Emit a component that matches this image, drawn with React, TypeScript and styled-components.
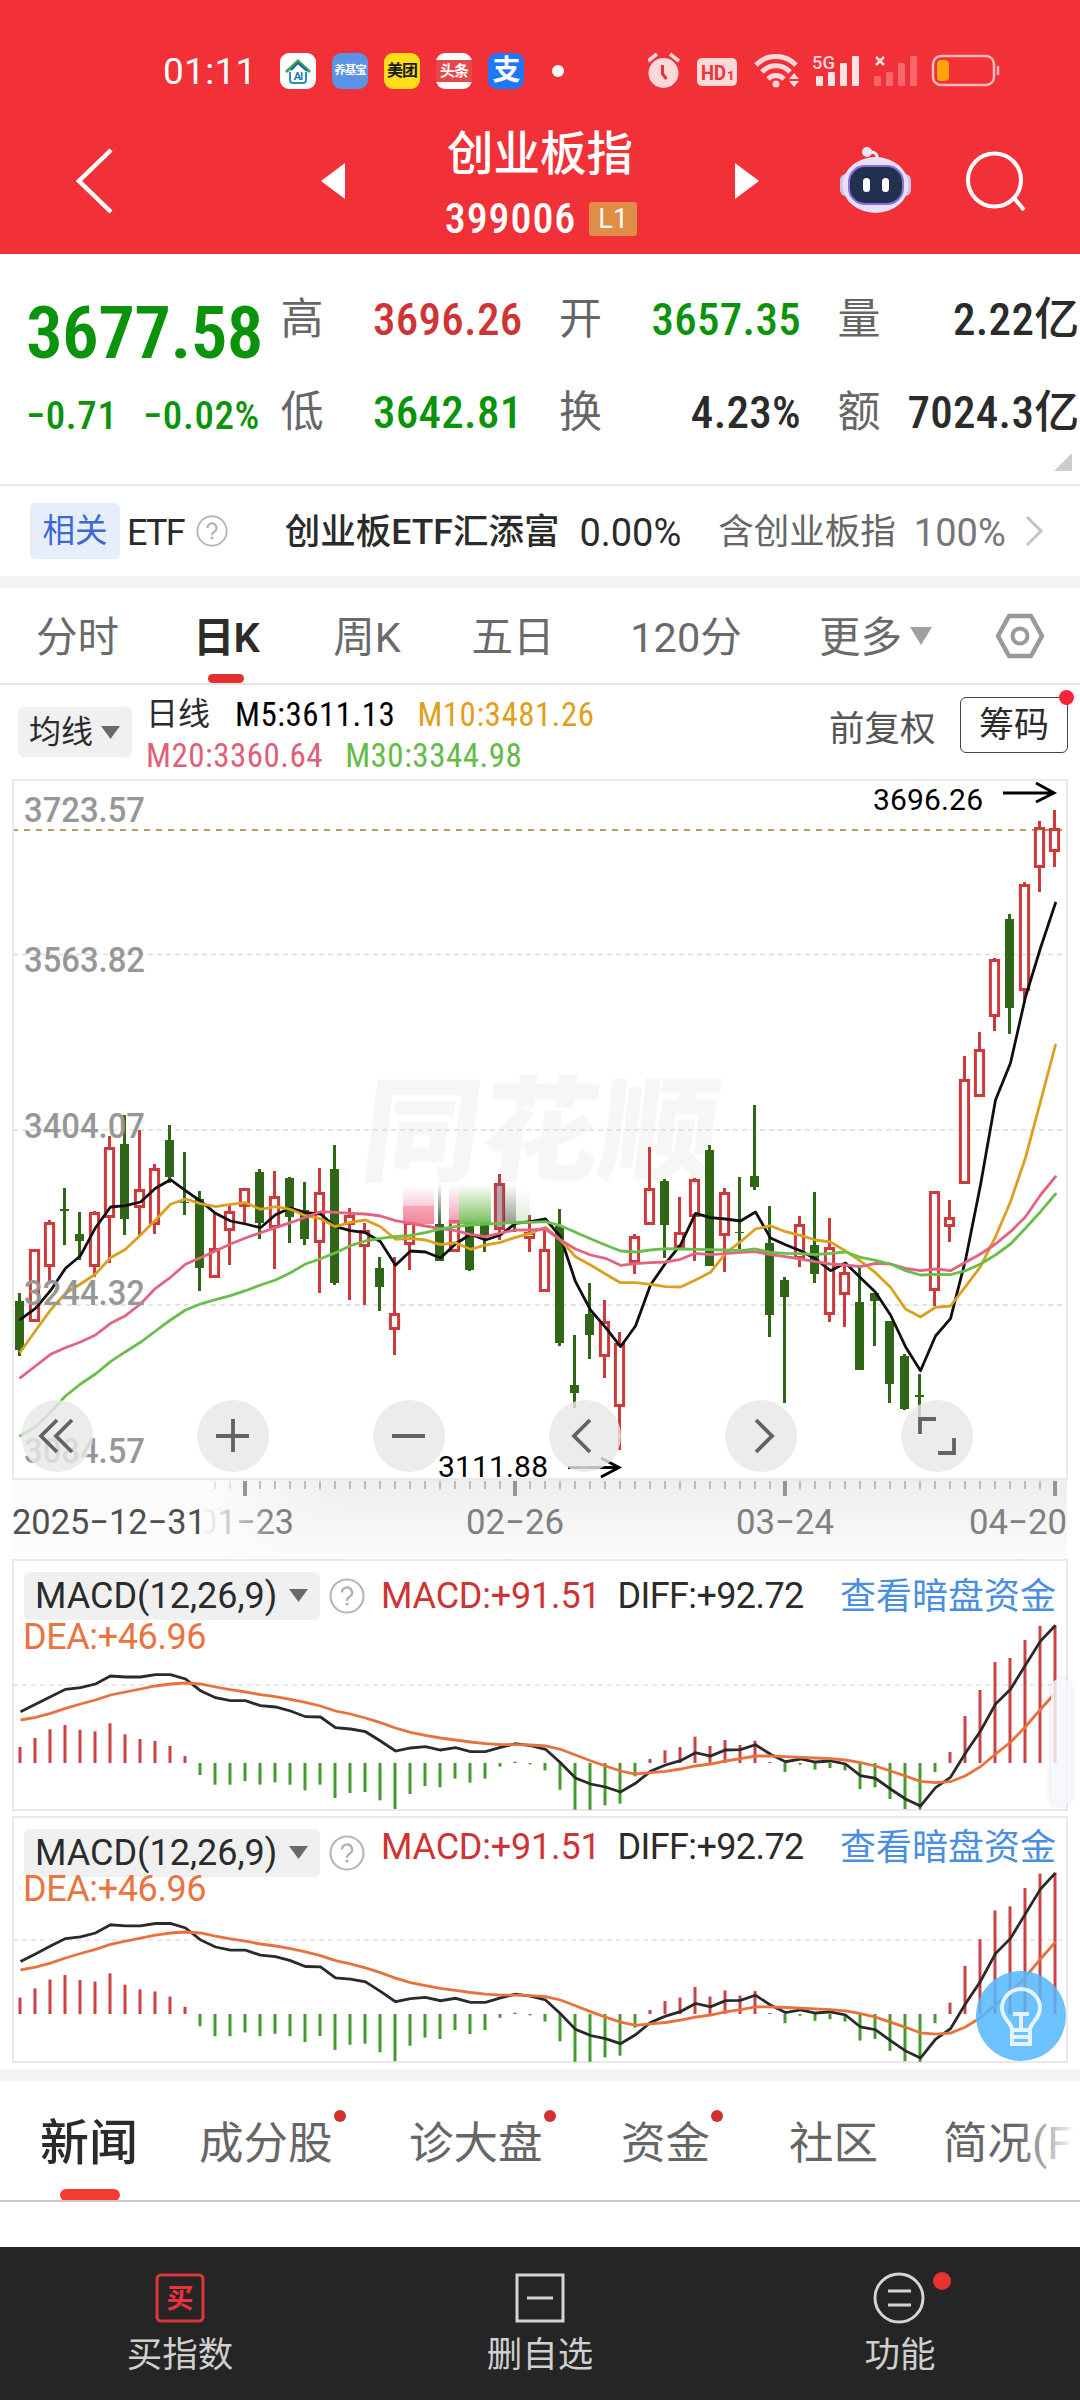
import { ReactNode } from 'react'
import styled, { createGlobalStyle } from 'styled-components'

const GlobalStyle = createGlobalStyle`
  * {
    box-sizing: border-box;
  }
  body {
    margin: 0;
    background: #fff;
    font-family: Roboto, 'Noto Sans CJK SC', sans-serif;
    color: #2b2b2b;
  }
  svg {
    display: block;
    flex: none;
  }
`

const RED = '#cc3a3c'
const GREEN = '#2f6618'

// ---------- data ----------

// direction (1 up, 0 down), high, body top, body bottom, low
const candles: number[][] = [
  [0, 1293, 1301, 1350, 1356],
  [1, 1249, 1249, 1322, 1322],
  [1, 1220, 1222, 1267, 1281],
  [0, 1188, 1209, 1211, 1245],
  [0, 1212, 1234, 1241, 1260],
  [1, 1211, 1212, 1267, 1277],
  [1, 1136, 1147, 1218, 1263],
  [0, 1115, 1144, 1219, 1235],
  [1, 1130, 1189, 1208, 1235],
  [1, 1164, 1168, 1225, 1234],
  [0, 1125, 1140, 1177, 1183],
  [0, 1152, 1202, 1203, 1215],
  [0, 1191, 1199, 1268, 1291],
  [1, 1213, 1248, 1278, 1278],
  [1, 1205, 1211, 1231, 1265],
  [1, 1188, 1188, 1207, 1223],
  [0, 1169, 1172, 1223, 1239],
  [1, 1171, 1196, 1228, 1269],
  [0, 1177, 1178, 1217, 1243],
  [0, 1182, 1210, 1239, 1245],
  [1, 1168, 1192, 1243, 1293],
  [0, 1145, 1169, 1283, 1285],
  [1, 1208, 1215, 1225, 1300],
  [1, 1223, 1230, 1247, 1305],
  [0, 1257, 1268, 1287, 1311],
  [1, 1257, 1313, 1330, 1355],
  [1, 1224, 1222, 1245, 1270],
  [],
  [0, 1224, 1224, 1261, 1261],
  [1, 1220, 1220, 1252, 1252],
  [0, 1222, 1222, 1270, 1271],
  [0, 1222, 1222, 1236, 1252],
  [1, 1174, 1183, 1230, 1240],
  [0, 1222, 1222, 1222, 1232],
  [1, 1215, 1232, 1239, 1252],
  [1, 1228, 1249, 1292, 1292],
  [0, 1209, 1226, 1343, 1346],
  [0, 1335, 1385, 1393, 1408],
  [0, 1283, 1314, 1335, 1359],
  [1, 1300, 1321, 1357, 1378],
  [1, 1332, 1343, 1407, 1450],
  [1, 1234, 1236, 1263, 1274],
  [1, 1147, 1188, 1225, 1225],
  [0, 1179, 1181, 1225, 1258],
  [1, 1197, 1232, 1248, 1248],
  [1, 1178, 1179, 1217, 1261],
  [0, 1145, 1150, 1266, 1266],
  [1, 1188, 1192, 1236, 1272],
  [0, 1177, 1232, 1233, 1249],
  [0, 1105, 1176, 1187, 1190],
  [0, 1206, 1243, 1315, 1337],
  [0, 1277, 1280, 1297, 1403],
  [1, 1216, 1224, 1259, 1267],
  [0, 1192, 1245, 1274, 1283],
  [1, 1218, 1247, 1315, 1322],
  [1, 1265, 1272, 1295, 1327],
  [0, 1267, 1302, 1370, 1370],
  [0, 1293, 1293, 1301, 1346],
  [0, 1321, 1321, 1384, 1403],
  [0, 1354, 1356, 1409, 1410],
  [0, 1374, 1395, 1397, 1427],
  [1, 1191, 1191, 1291, 1306],
  [1, 1200, 1217, 1227, 1242],
  [1, 1056, 1079, 1184, 1184],
  [1, 1032, 1049, 1097, 1097],
  [1, 958, 959, 1017, 1031],
  [0, 914, 919, 1008, 1034],
  [1, 882, 884, 991, 1003],
  [1, 821, 827, 868, 892],
  [1, 810, 828, 852, 867],
]

// moving averages, thirds of a pixel below y=1080
const ma5 = [
  718, 685, 632, 565, 527, 443, 381, 377, 366, 325, 299, 332, 363, 400, 423, 432, 443, 404, 384, 398, 402, 440, 452,
  458, 485, 556, 513, 516, 534, 492, 463, 480, 465, 430, 425, 417, 470, 605, 690, 742, 800, 738, 615, 550, 495, 400,
  413, 417, 423, 396, 474, 494, 512, 537, 572, 549, 593, 637, 705, 800, 872, 768, 716, 540, 315, 60, -51, -249, -396,
  -531,
]
const ma10 = [
  815, 752, 690, 640, 612, 582, 533, 508, 465, 420, 373, 357, 371, 380, 373, 368, 388, 380, 388, 407, 416, 440, 427,
  420, 440, 478, 475, 480, 494, 488, 508, 495, 487, 472, 460, 442, 480, 530, 555, 582, 608, 608, 613, 620, 621, 600,
  577, 520, 485, 447, 437, 455, 466, 480, 486, 513, 543, 578, 622, 687, 711, 682, 678, 620, 560, 470, 365, 233, 65,
  -105,
]
const ma20 = [
  893, 858, 823, 803, 786, 765, 730, 707, 672, 625, 592, 553, 533, 513, 492, 474, 458, 443, 428, 412, 395, 397, 400,
  402, 408, 422, 430, 438, 446, 452, 463, 470, 459, 450, 450, 447, 480, 507, 525, 535, 556, 551, 548, 546, 538, 520,
  524, 521, 517, 515, 524, 530, 537, 545, 552, 555, 560, 550, 552, 565, 572, 567, 572, 547, 522, 492, 455, 410, 345,
  290,
]
const ma30 = [
  1067, 1040, 997, 948, 912, 882, 845, 815, 787, 753, 720, 690, 672, 659, 647, 632, 615, 600, 578, 552, 536, 518, 497,
  483, 475, 470, 466, 458, 447, 440, 435, 432, 430, 428, 427, 425, 437, 457, 476, 495, 513, 516, 510, 506, 507, 508,
  509, 510, 512, 507, 517, 520, 521, 524, 520, 516, 532, 541, 552, 572, 585, 583, 584, 572, 552, 525, 492, 445, 395,
  342,
]

const macdBars = [
  48, 75, 101, 114, 99, 95, 119, 86, 72, 66, 51, 21, -36, -65, -65, -54, -65, -58, -65, -82, -65, -105, -90, -87, -112,
  -138, -93, -69, -73, -47, -59, -47, -11, 4, -4, -22, -80, -140, -140, -127, -122, -40, 12, 38, 48, 79, 51, 69, 54,
  67, 3, -27, -5, -20, -15, -22, -78, -73, -108, -138, -140, -27, 33, 141, 219, 303, 315, 369, 411, 413,
]
const diff = [
  515, 493, 470, 448, 443, 432, 408, 411, 411, 404, 404, 417, 452, 473, 482, 482, 497, 501, 513, 530, 531, 563, 567,
  575, 603, 633, 624, 620, 630, 623, 635, 635, 622, 611, 617, 628, 668, 714, 732, 741, 756, 730, 694, 675, 662, 638,
  648, 630, 629, 614, 643, 665, 657, 666, 663, 672, 707, 715, 747, 777, 798, 743, 712, 639, 573, 492, 448, 375, 303,
  256,
]
const dea = [
  540, 532, 520, 505, 492, 480, 465, 456, 447, 438, 432, 429, 432, 441, 449, 456, 464, 470, 478, 487, 498, 513, 522,
  534, 548, 564, 577, 586, 594, 600, 606, 611, 614, 614, 615, 618, 628, 645, 662, 678, 693, 702, 698, 694, 687, 678,
  672, 663, 656, 648, 648, 650, 652, 654, 656, 660, 668, 678, 693, 708, 724, 728, 725, 707, 680, 642, 607, 560, 508,
  458,
]

const cx = (i: number) => 19.5 + i * 15

const line = (values: number[], toY: (v: number) => number) =>
  values.map((v, i) => `${cx(i) + 1},${toY(v).toFixed(1)}`).join(' ')

// ---------- shared ----------

const Num = styled.span<{ $size: number; $color?: string; $weight?: number; $ls?: number; $narrow?: boolean }>`
  font-size: ${({ $size }) => $size}px;
  font-weight: ${({ $weight }) => $weight ?? 400};
  font-stretch: ${({ $narrow }) => ($narrow ? 75 : 100)}%;
  letter-spacing: ${({ $ls }) => $ls ?? 0}px;
  color: ${({ $color }) => $color ?? 'inherit'};
  line-height: 1;
  white-space: nowrap;
`

const Screen = styled.div`
  width: 1080px;
  height: 2400px;
  overflow: hidden;
  display: flex;
  flex-direction: column;
  background: #fff;
`

const Band = styled.div`
  height: 12px;
  flex: none;
  background: #f3f3f3;
`

// ---------- header ----------

const Top = styled.header`
  height: 254px;
  flex: none;
  background: #f13038;
  color: #fff;
`

const StatusBar = styled.div`
  height: 89px;
  padding: 53px 80px 0 163px;
  display: flex;
  align-items: center;
`

const Clock = styled(Num)`
  width: 117px;
`

const AppIcon = styled.div<{ $bg: string; $color: string; $size: number }>`
  width: 36px;
  height: 36px;
  margin-right: 16px;
  border-radius: 9px;
  display: flex;
  align-items: center;
  justify-content: center;
  background: ${({ $bg }) => $bg};
  color: ${({ $color }) => $color};
  font-size: ${({ $size }) => $size}px;
  font-weight: 700;
  line-height: 1;
  letter-spacing: -1px;
  white-space: nowrap;
`

const MoreDot = styled.div`
  width: 12px;
  height: 12px;
  margin-left: 12px;
  border-radius: 50%;
  background: #fff;
`

const StatusIcons = styled.svg`
  margin-left: auto;
`

const TitleBar = styled.div`
  height: 165px;
  padding-top: 18px;
  display: grid;
  grid-template-columns: 321px 24px 390px 24px 81px 71px 55px 60px;
  align-items: center;
`

const TitleBlock = styled.div`
  height: 100%;
  padding-top: 22px;
  display: flex;
  flex-direction: column;
  align-items: center;
`

const Title = styled.div`
  font-size: 46.5px;
  font-weight: 500;
  line-height: 50px;
`

const Code = styled.div`
  margin-top: 19px;
  padding-left: 2px;
  display: flex;
  align-items: center;
  gap: 13px;
`

const Level = styled.div`
  width: 48px;
  height: 34px;
  border-radius: 3px;
  background: #e08d48;
  font-size: 27px;
  line-height: 35px;
  text-align: center;
`

const Header = () => (
  <Top>
    <StatusBar>
      <Clock $size={37} $ls={0.3}>
        01:11
      </Clock>
      <AppIcon $bg="#fff" $color="#2276b5" $size={13}>
        <svg width="32" height="32" viewBox="0 0 32 32" fill="none">
          <path d="M4 17 16 6l12 11" stroke="#3aa655" strokeWidth="3" />
          <path d="M9 15 16 8l9 8" stroke="#1c5fa8" strokeWidth="2" />
          <path d="M8 17v8a3 3 0 0 0 3 3h10a3 3 0 0 0 3-3v-8" stroke="#2a8fc4" strokeWidth="2" />
          <text x="16" y="25" fill="#2276b5" fontSize="11" fontWeight="700" textAnchor="middle">
            AI
          </text>
        </svg>
      </AppIcon>
      <AppIcon $bg="#5b93e6" $color="#fff" $size={11.5}>
        养基宝
      </AppIcon>
      <AppIcon $bg="#ffdd1a" $color="#1c1c1c" $size={16}>
        美团
      </AppIcon>
      <AppIcon $bg="linear-gradient(#fff 7px, #e5484a 7px 29px, #fff 29px)" $color="#fff" $size={15}>
        头条
      </AppIcon>
      <AppIcon $bg="#1c77fb" $color="#fff" $size={28}>
        支
      </AppIcon>
      <MoreDot />
      <StatusIcons width="352" height="42" viewBox="648 50 352 42" fill="none">
        <g fill="#ffd9da">
          <circle cx="663.500" cy="73" r="15" />
          <path d="m648 61 9-7M679 61l-9-7" stroke="#ffd9da" strokeWidth="3.500" />
          <path d="M662.500 65v9l4 5" stroke="#f13038" strokeWidth="3" />
          <rect x="697" y="58" width="40" height="28" rx="5" />
        </g>
        <text x="701" y="80" fill="#f13038" fontSize="21" fontWeight="700" textLength="25" lengthAdjust="spacingAndGlyphs">
          HD
        </text>
        <text x="727" y="80" fill="#f13038" fontSize="13" fontWeight="700">
          1
        </text>
        <g stroke="#ffd9da" strokeWidth="5">
          <path d="M756 65a28 28 0 0 1 40 0" />
          <path d="M762 72a19 19 0 0 1 28 0" />
          <path d="M768 79a11 11 0 0 1 16 0" />
        </g>
        <circle cx="776" cy="84" r="3.500" fill="#ffd9da" />
        <path d="m789 79 5-6 5 6zM789 81l5 6 5-6z" fill="#ffd9da" />
        <text x="812" y="69" fill="#ffd9da" fontSize="19" fontWeight="500" textLength="23" lengthAdjust="spacingAndGlyphs">
          5G
        </text>
        <g fill="#ffe3e4">
          <rect x="816" y="76" width="7" height="10" rx="1" />
          <rect x="828" y="72" width="7" height="14" rx="1" />
          <rect x="840" y="63" width="7" height="23" rx="1" />
          <rect x="852" y="56" width="7" height="30" rx="1" />
        </g>
        <path d="m876 57 8 8m0-8-8 8" stroke="#ffd9da" strokeWidth="2.500" />
        <g fill="#f7686e">
          <rect x="874" y="76" width="7" height="10" rx="1" />
          <rect x="886" y="72" width="7" height="14" rx="1" />
          <rect x="898" y="63" width="7" height="23" rx="1" />
          <rect x="910" y="56" width="7" height="30" rx="1" />
        </g>
        <rect x="933" y="56" width="61" height="29" rx="8" stroke="#fdb9bb" strokeWidth="2.500" />
        <rect x="937" y="60" width="12" height="21" rx="4" fill="#ffa409" />
        <path d="M998 66v9" stroke="#fdb9bb" strokeWidth="2.500" />
      </StatusIcons>
    </StatusBar>
    <TitleBar>
      <svg width="120" height="70" viewBox="0 144 120 70" fill="none">
        <path d="M111 148 79 179l32 31" stroke="#fff" strokeWidth="4.500" />
      </svg>
      <svg width="24" height="36" viewBox="0 0 24 36">
        <path d="M24 0v36L0 18z" fill="#fff" />
      </svg>
      <TitleBlock>
        <Title>创业板指</Title>
        <Code>
          <Num $size={42} $narrow $ls={0.9} $weight={500}>
            399006
          </Num>
          <Level>L1</Level>
        </Code>
      </TitleBlock>
      <svg width="24" height="36" viewBox="0 0 24 36">
        <path d="M0 0v36l24-18z" fill="#fff" />
      </svg>
      <i />
      <svg width="71" height="68" viewBox="840 146 71 68" fill="none">
        <path d="M877 158q1-7-7-7" stroke="#fff" strokeWidth="3" />
        <circle cx="867" cy="151" r="5" fill="#ece4fb" />
        <rect x="840" y="173" width="12" height="22" rx="6" fill="#cfc3ee" />
        <rect x="899" y="173" width="12" height="22" rx="6" fill="#cfc3ee" />
        <ellipse cx="875.500" cy="184" rx="33" ry="28" fill="#e6e0fb" />
        <rect x="849" y="165" width="54" height="38" rx="16" fill="#22304f" stroke="#8a6fd8" strokeWidth="2" />
        <rect x="863" y="177" width="7" height="14" rx="3.500" fill="#fff" />
        <rect x="882" y="177" width="7" height="14" rx="3.500" fill="#fff" />
      </svg>
      <i />
      <svg width="60" height="62" viewBox="0 0 60 62" fill="none" stroke="#fff" strokeWidth="4">
        <circle cx="28.500" cy="30" r="26.500" />
        <path d="m48 48 10 12" />
      </svg>
    </TitleBar>
  </Top>
)

// ---------- quote ----------

const QuoteGrid = styled.section`
  position: relative;
  height: 232px;
  flex: none;
  padding: 19px 1px 0 26px;
  display: grid;
  grid-template-columns: 218px repeat(3, 242px);
  grid-template-rows: 93px 93px;
  align-content: start;
  column-gap: 36.5px;
  border-bottom: 2px solid #e9e9e9;
`

const Price = styled.div`
  padding-top: 24px;
`

const Change = styled.div`
  display: flex;
  justify-content: space-between;
  align-items: center;
  width: 234px;
  padding-top: 7px;
`

const Cell = styled.div`
  display: flex;
  justify-content: space-between;
  align-items: center;
  white-space: nowrap;
`

const Label = styled.span`
  font-size: 43px;
  line-height: 1;
  color: #666;
`

const Corner = styled.svg`
  position: absolute;
  right: 8px;
  bottom: 13px;
`

type CellProps = { label: string; value: string; color?: string }

const QuoteCell = ({ label, value, color = '#2b2b2b' }: CellProps) => (
  <Cell>
    <Label>{label}</Label>
    <Num $size={45} $weight={500} $narrow $ls={0.3} $color={color}>
      {value}
    </Num>
  </Cell>
)

const UP = '#cf3434'
const DOWN = '#0b930b'

const Quote = () => (
  <QuoteGrid>
    <Price>
      <Num $size={73} $weight={600} $narrow $ls={-0.6} $color={DOWN}>
        3677.58
      </Num>
    </Price>
    <QuoteCell label="高" value="3696.26" color={UP} />
    <QuoteCell label="开" value="3657.35" color={DOWN} />
    <QuoteCell label="量" value="2.22亿" />
    <Change>
      <Num $size={39} $weight={500} $narrow $ls={0.6} $color={DOWN}>
        −0.71
      </Num>
      <Num $size={39} $weight={500} $narrow $ls={0.6} $color={DOWN}>
        −0.02%
      </Num>
    </Change>
    <QuoteCell label="低" value="3642.81" color={DOWN} />
    <QuoteCell label="换" value="4.23%" />
    <QuoteCell label="额" value="7024.3亿" />
    <Corner width="18" height="18">
      <path d="M18 0v18H0z" fill="#ccc" />
    </Corner>
  </QuoteGrid>
)

const EtfRow = styled.section`
  height: 90px;
  flex: none;
  padding-left: 30px;
  display: flex;
  align-items: center;

  > span {
    margin-top: 4px;
  }
`

const Related = styled.div`
  width: 90px;
  height: 56px;
  margin-right: 7px;
  border-radius: 5px;
  background: #e7eefb;
  color: #3c68d4;
  font-size: 32.5px;
  line-height: 56px;
  text-align: center;
`

const Spacer = styled.div<{ $w: number }>`
  width: ${({ $w }) => $w}px;
  flex: none;
`

const HelpIcon = ({ size = 32 }: { size?: number }) => (
  <svg width={size} height={size} viewBox="0 0 36 36" fill="none">
    <circle cx="18" cy="18" r="16.500" stroke="#b8b8b8" strokeWidth="2.200" />
    <path d="M13 14.500a5 5 0 1 1 7.500 4.300c-1.900 1.100-2.500 1.900-2.500 4" stroke="#b0b0b0" strokeWidth="2.300" />
    <circle cx="18" cy="26" r="1.600" fill="#b0b0b0" />
  </svg>
)

const Etf = () => (
  <EtfRow>
    <Related>相关</Related>
    <Num $size={36} $ls={-1.8}>
      ETF
    </Num>
    <Spacer $w={12} />
    <HelpIcon />
    <Spacer $w={57} />
    <Num $size={35.5} $weight={500}>
      创业板ETF汇添富
    </Num>
    <Spacer $w={20} />
    <Num $size={38}>0.00%</Num>
    <Spacer $w={37} />
    <Num $size={35.5} $color="#666">
      含创业板指
    </Num>
    <Spacer $w={18} />
    <Num $size={38} $color="#777">
      100%
    </Num>
    <Spacer $w={19} />
    <svg width="20" height="32" viewBox="0 0 20 32" fill="none">
      <path d="m2 2 14 14L2 30" stroke="#c4c4c4" strokeWidth="3" />
    </svg>
  </EtfRow>
)

// ---------- period tabs ----------

const PeriodBar = styled.nav`
  height: 97px;
  flex: none;
  display: grid;
  grid-template-columns: 155px 142px 140px 152px 194px 119px 178px;
  align-items: center;
  border-bottom: 2px solid #e3e3e3;
`

const Period = styled.div<{ $active?: boolean; $end?: boolean }>`
  position: relative;
  height: 100%;
  display: flex;
  align-items: center;
  justify-content: ${({ $end }) => ($end ? 'flex-end' : 'center')};
  font-size: 41.5px;
  line-height: 1;
  padding-top: 4px;
  color: ${({ $active }) => ($active ? '#2b2b2b' : '#6a6a6a')};
  font-weight: ${({ $active }) => ($active ? 600 : 400)};
  letter-spacing: ${({ $active }) => ($active ? -1 : 0)}px;
  white-space: nowrap;

  &::after {
    content: '';
    display: ${({ $active }) => ($active ? 'block' : 'none')};
    position: absolute;
    bottom: 0;
    left: calc(50% - 18px);
    width: 36px;
    height: 9px;
    border-radius: 5px;
    background: #e3302e;
  }
`

const Periods = () => (
  <PeriodBar>
    <Period>分时</Period>
    <Period $active>日K</Period>
    <Period>周K</Period>
    <Period>五日</Period>
    <Period>120分</Period>
    <Period $end>更多</Period>
    <svg width="154" height="62" viewBox="902 605 154 62" fill="none">
      <path d="M910 627h22l-11 18z" fill="#a0a0a0" />
      <path d="m998 636 11-20h22l11 20-11 20h-22z" stroke="#999" strokeWidth="4.500" strokeLinejoin="round" />
      <circle cx="1020" cy="636" r="7.500" stroke="#999" strokeWidth="4" />
    </svg>
  </PeriodBar>
)

// ---------- moving average legend ----------

const Legend = styled.section`
  height: 94px;
  flex: none;
  padding: 12px 12px 0 18px;
  display: flex;
`

const Picker = styled.div<{ $w: number; $h: number }>`
  width: ${({ $w }) => $w}px;
  height: ${({ $h }) => $h}px;
  padding: 0 12px 0 11px;
  display: flex;
  align-items: center;
  justify-content: space-between;
  border-radius: 6px;
  background: #f0f0f0;
  font-size: 32px;
  line-height: 1;
  white-space: nowrap;
`

const Averages = styled.div`
  margin-left: 14px;
  width: 683px;
  display: flex;
  flex-direction: column;
  gap: 7px;
`

const AverageRow = styled.div`
  display: flex;
  align-items: center;
  height: 34px;
`

const Adjust = styled.div`
  width: 131px;
  padding-top: 12px;
  font-size: 35.5px;
  line-height: 40px;
  color: #555;
`

const Chips = styled.div`
  position: relative;
  width: 108px;
  height: 56px;
  border: 1.5px solid #444;
  border-radius: 6px;
  font-size: 35px;
  line-height: 56px;
  text-align: center;

  &::after {
    content: '';
    position: absolute;
    top: -8px;
    right: -7px;
    width: 15px;
    height: 15px;
    border-radius: 50%;
    background: #f82438;
  }
`

const PickerWrap = styled.div`
  padding-top: 10px;
`

const Caret = () => (
  <svg width="19" height="13">
    <path d="M0 0h19L9.500 13z" fill="#6a6a6a" />
  </svg>
)

const MaLegend = () => (
  <Legend>
    <PickerWrap>
      <Picker $w={114} $h={50}>
        均线
        <Caret />
      </Picker>
    </PickerWrap>
    <Averages>
      <AverageRow>
        <Num $size={32}>日线</Num>
        <Spacer $w={25} />
        <Num $size={33} $color="#000" $narrow $ls={0.5}>
          M5:3611.13
        </Num>
        <Spacer $w={22} />
        <Num $size={33} $color="#dfa020" $narrow $ls={0.5}>
          M10:3481.26
        </Num>
      </AverageRow>
      <AverageRow>
        <Num $size={33} $color="#e0607a" $narrow $ls={0.5}>
          M20:3360.64
        </Num>
        <Spacer $w={22} />
        <Num $size={33} $color="#64bb46" $narrow $ls={0.5}>
          M30:3344.98
        </Num>
      </AverageRow>
    </Averages>
    <Adjust>前复权</Adjust>
    <Chips>筹码</Chips>
  </Legend>
)

// ---------- candle chart ----------

const ChartBox = styled.section`
  position: relative;
  height: 780px;
  flex: none;
`

const Controls = styled.div`
  position: absolute;
  left: 21px;
  top: 621px;
  display: flex;
  gap: 104px;
`

const Control = styled.button`
  width: 72px;
  height: 72px;
  padding: 0;
  border: 0;
  border-radius: 50%;
  background: rgba(232, 232, 232, 0.82);
`

const ControlButton = ({ children }: { children: ReactNode }) => (
  <Control>
    <svg width="72" height="72" viewBox="-36 -36 72 72" fill="none" stroke="#636363" strokeWidth="3.800">
      {children}
    </svg>
  </Control>
)

const axisLabels: [string, number][] = [
  ['3723.57', 822],
  ['3563.82', 972],
  ['3404.07', 1138],
  ['3244.32', 1305],
  ['3084.57', 1463],
]

const toMaY = (v: number) => 1080 + v / 3

const Candle = ({ data, x }: { data: number[]; x: number }) => {
  const [up, high, top, bottom, low] = data
  if (high === undefined) return null
  if (!up) {
    return (
      <g fill={GREEN}>
        <rect x={x - 1.5} y={high} width="3" height={low - high} />
        <rect x={x - 4.5} y={top} width="9" height={Math.max(bottom - top, 1)} />
      </g>
    )
  }
  return (
    <g stroke={RED} strokeWidth="3" fill="none">
      <path d={`M${x} ${high}V${top + 1}M${x} ${bottom - 1}V${low}`} />
      <rect x={x - 4.1} y={top + 1.5} width="8.200" height={bottom - top - 3} />
    </g>
  )
}

const CandleChart = () => (
  <ChartBox>
    <svg width="1080" height="780" viewBox="0 779 1080 780">
      <defs>
        <linearGradient id="axis" x1="0" y1="0" x2="0" y2="1">
          <stop offset="0" stopColor="#eee" />
          <stop offset="1" stopColor="#fbfbfb" />
        </linearGradient>
        <linearGradient id="axisFade" x1="0" y1="0" x2="1" y2="0">
          <stop offset="0" stopColor="#fdfdfd" />
          <stop offset="0.600" stopColor="#fdfdfd" />
          <stop offset="1" stopColor="#f8f8f8" stopOpacity="0" />
        </linearGradient>
        <linearGradient id="dateFade" gradientUnits="userSpaceOnUse" x1="200" y1="0" x2="275" y2="0">
          <stop offset="0" stopColor="#fdfdfd" />
          <stop offset="1" stopColor="#808080" />
        </linearGradient>
        <linearGradient id="smearPink" x1="0" y1="0" x2="0" y2="1">
          <stop offset="0" stopColor="#f58ba0" stopOpacity="0" />
          <stop offset="1" stopColor="#f0708a" stopOpacity="0.750" />
        </linearGradient>
        <linearGradient id="smearGreen" x1="0" y1="0" x2="0" y2="1">
          <stop offset="0" stopColor="#7cc35f" stopOpacity="0" />
          <stop offset="1" stopColor="#6cb94e" stopOpacity="0.950" />
        </linearGradient>
        <linearGradient id="smearDark" x1="0" y1="0" x2="0" y2="1">
          <stop offset="0" stopColor="#28401c" stopOpacity="0" />
          <stop offset="1" stopColor="#28401c" stopOpacity="0.850" />
        </linearGradient>
      </defs>

      <text
        transform="translate(358 1172) skewX(-7)"
        fontFamily="'Noto Sans CJK SC'"
        fontSize="114"
        fontWeight="900"
        textLength="356"
        lengthAdjust="spacingAndGlyphs"
        fill="#f6f6f6"
      >
        同花顺
      </text>

      <g stroke="#dcdcdc" strokeWidth="1.500" strokeDasharray="5 4">
        <path d="M13 954.500H1067M13 1130H1067M13 1305H1067" />
      </g>
      <path d="M12 830H1062" stroke="#b99a5f" strokeWidth="2" strokeDasharray="6 6" />
      <rect x="13" y="780" width="1054" height="699" fill="none" stroke="#e9e9e9" strokeWidth="2" />

      {candles.map((c, i) => (
        <Candle key={i} data={c} x={cx(i)} />
      ))}

      <rect x="403" y="1186" width="31" height="38" fill="url(#smearPink)" />
      <rect x="403" y="1206" width="31" height="18" fill="#f0708a" opacity="0.400" />
      <rect x="438" y="1184" width="3" height="40" fill="url(#smearDark)" />
      <rect x="449" y="1184" width="10" height="40" fill="url(#smearPink)" />
      <rect x="459" y="1184" width="32" height="40" fill="url(#smearGreen)" />
      <rect x="495" y="1183" width="9" height="45" fill="#8c5060" opacity="0.550" />
      <rect x="504" y="1184" width="12" height="40" fill="url(#smearDark)" opacity="0.600" />
      <rect x="516" y="1190" width="14" height="34" fill="url(#smearGreen)" opacity="0.300" />

      <g fill="none" strokeWidth="2.800" strokeLinejoin="round" strokeLinecap="round">
        <polyline points={line(ma5, toMaY)} stroke="#101010" />
        <polyline points={line(ma10, toMaY)} stroke="#dba01f" />
        <polyline points={line(ma20, toMaY)} stroke="#e26480" />
        <polyline points={line(ma30, toMaY)} stroke="#68bf4a" />
      </g>

      <g fill="#979797" fontSize="35" fontWeight="500">
        {axisLabels.map(([text, y]) => (
          <text key={text} x="24" y={y} textLength="121" lengthAdjust="spacingAndGlyphs">
            {text}
          </text>
        ))}
      </g>

      <g fill="#000" fontSize="30">
        <text x="873" y="810" textLength="110">
          3696.26
        </text>
        <text x="438" y="1476.500" textLength="110">
          3111.88
        </text>
      </g>
      <g fill="none" stroke="#000" strokeWidth="2.900">
        <path d="M1003 793h51M1036 783l18 10-18 9" />
        <path d="M568 1467.500h51M601 1458l18 9.500-18 9.500" />
      </g>

      <rect x="13" y="1480" width="1054" height="79" fill="url(#axis)" />
      <rect x="12" y="1480" width="340" height="79" fill="url(#axisFade)" opacity="0.850" />
      {candles.map((_, i) => {
        const major = i % 18 === 15
        if (i < 13) return null
        return (
          <rect
            key={i}
            x={major ? cx(i) - 1.5 : cx(i) - 0.5}
            y="1481"
            width={major ? 4 : 2}
            height={major ? 15 : 8}
            fill={major ? '#969696' : '#bdbdbd'}
            opacity={i < 15 ? 0.4 : 1}
          />
        )
      })}
      <g fill="#808080" fontSize="35">
        <text x="198" y="1533.500" textLength="96" lengthAdjust="spacingAndGlyphs" fill="url(#dateFade)">
          01−23
        </text>
        <text x="466" y="1533.500" textLength="98" lengthAdjust="spacingAndGlyphs">
          02−26
        </text>
        <text x="736" y="1533.500" textLength="98" lengthAdjust="spacingAndGlyphs">
          03−24
        </text>
        <text x="969" y="1533.500" textLength="98" lengthAdjust="spacingAndGlyphs">
          04−20
        </text>
        <text x="12" y="1533.500" fill="#505050" textLength="194" lengthAdjust="spacingAndGlyphs">
          2025−12−31
        </text>
      </g>
    </svg>
    <Controls>
      <ControlButton>
        <path d="M0-16-16 0 0 16M15-16-1 0 15 16" />
      </ControlButton>
      <ControlButton>
        <path d="M0-17v33M-17 0h33" />
      </ControlButton>
      <ControlButton>
        <path d="M-17 0h33" />
      </ControlButton>
      <ControlButton>
        <path d="M5-16-11 0 5 16" />
      </ControlButton>
      <ControlButton>
        <path d="M-5-16 11 0-5 16" />
      </ControlButton>
      <ControlButton>
        <path d="M-1-17h-16v15M17 2v15H1" />
      </ControlButton>
    </Controls>
  </ChartBox>
)

// ---------- macd ----------

const MacdPanel = styled.section<{ $h: number; $gap: number }>`
  position: relative;
  width: 1056px;
  height: ${({ $h }) => $h}px;
  margin: 0 0 ${({ $gap }) => $gap}px 12px;
  flex: none;
  border: 2px solid #e9e9e9;
`

const Plot = styled.svg`
  position: absolute;
  left: -14px;
  top: -2px;
`

const MacdHead = styled.div`
  position: relative;
  height: 58px;
  padding: 11px 10px 0 10px;
  display: flex;
  align-items: center;
`

const MacdValues = styled.div<{ $shift: number }>`
  flex: 1;
  margin-left: 16px;
  padding-bottom: ${({ $shift }) => $shift}px;
  display: flex;
  align-items: center;
`

const DarkLink = styled.span`
  margin-left: auto;
  padding-top: 2px;
  font-size: 36px;
  line-height: 1;
  color: #4a8fdf;
`

const DeaLine = styled.div<{ $shift: number }>`
  position: relative;
  padding-left: 9px;
  margin-top: ${({ $shift }) => -$shift}px;
  line-height: 1;
`

type MacdProps = { h: number; gap: number; zero: number; scale: number; grid: number; shift: number; children?: ReactNode }

const Macd = ({ h, gap, zero, scale, grid, shift, children }: MacdProps) => {
  const toY = (v: number) => zero + ((v - 669) / 3) * scale
  return (
    <MacdPanel $h={h} $gap={gap}>
      <Plot width="1080" height={h} fill="none">
        <path d={`M13 ${grid}H1067`} stroke="#e2e2e2" strokeWidth="1.500" strokeDasharray="5 4" />
        {macdBars.map((v, i) => {
          const len = (Math.abs(v) / 3) * scale
          return (
            <rect
              key={i}
              x={cx(i) - 1}
              y={v > 0 ? zero - len : zero}
              width="3"
              height={len}
              fill={v > 0 ? '#cb4344' : '#459b2f'}
            />
          )
        })}
        <polyline points={line(diff, toY)} stroke="#2a2a2a" strokeWidth="2.800" />
        <polyline points={line(dea, toY)} stroke="#e8713c" strokeWidth="2.800" />
      </Plot>
      <MacdHead>
        <Picker $w={296} $h={48}>
          <Num $size={36}>MACD(12,26,9)</Num>
          <Caret />
        </Picker>
        <Spacer $w={9} />
        <HelpIcon size={36} />
        <MacdValues $shift={shift}>
          <Num $size={36} $ls={-0.2} $color="#cf3434">
            MACD:+91.51
          </Num>
          <Spacer $w={17} />
          <Num $size={36} $ls={-0.6}>
            DIFF:+92.72
          </Num>
          <DarkLink>查看暗盘资金</DarkLink>
        </MacdValues>
      </MacdHead>
      <DeaLine $shift={shift * 0.4}>
        <Num $size={36} $ls={-0.4} $color="#ea7440">
          DEA:+46.96
        </Num>
      </DeaLine>
      {children}
    </MacdPanel>
  )
}

const ScrollHandle = styled.div`
  position: absolute;
  right: -5px;
  bottom: 3px;
  width: 20px;
  height: 128px;
  border-radius: 10px;
  background: rgba(245, 246, 252, 0.82);
  box-shadow: 0 0 6px rgba(0, 0, 0, 0.12);
`

const Bulb = styled.div`
  position: absolute;
  right: 0;
  bottom: 0;
  width: 90px;
  height: 90px;
  border-radius: 50%;
  background: rgba(84, 184, 255, 0.86);
`

// ---------- news tabs & footer ----------

const NewsTabs = styled.nav`
  position: relative;
  height: 121px;
  flex: none;
  padding-left: 40px;
  display: flex;
  border-bottom: 2px solid #c9c9c9;
  overflow: hidden;

  &::after {
    content: '';
    position: absolute;
    right: 0;
    top: 0;
    width: 64px;
    height: 110px;
    background: linear-gradient(to right, rgba(255, 255, 255, 0), #fff 95%);
  }
`

const NewsTab = styled.div<{ $w: number; $active?: boolean; $dot?: boolean }>`
  width: ${({ $w }) => $w}px;
  flex: none;
  font-size: ${({ $active }) => ($active ? 49 : 44.5)}px;
  font-weight: ${({ $active }) => ($active ? 500 : 400)};
  line-height: 126px;
  color: ${({ $active }) => ($active ? '#2b2b2b' : '#666')};
  white-space: nowrap;

  span {
    position: relative;
    display: inline-block;
    height: 120px;
  }

  span::after {
    content: '';
    display: ${({ $active, $dot }) => ($active || $dot ? 'block' : 'none')};
    position: absolute;
    ${({ $active }) =>
      $active
        ? `left: 20px; bottom: 0; width: 60px; height: 12px; border-radius: 6px; background: #f53b31;`
        : `right: -13px; top: 29px; width: 12px; height: 12px; border-radius: 50%; background: #d2312f;`}
  }
`

const Footer = styled.footer`
  margin-top: auto;
  height: 153px;
  flex: none;
  display: grid;
  grid-template-columns: repeat(3, 1fr);
  background: #252525;
  color: #cfcfcf;
`

const Action = styled.div`
  padding-top: 24px;
  display: flex;
  flex-direction: column;
  align-items: center;
  font-size: 35.5px;
  line-height: 60px;
`

const News = () => (
  <NewsTabs>
    <NewsTab $w={159} $active>
      <span>新闻</span>
    </NewsTab>
    <NewsTab $w={210} $dot>
      <span>成分股</span>
    </NewsTab>
    <NewsTab $w={212} $dot>
      <span>诊大盘</span>
    </NewsTab>
    <NewsTab $w={168} $dot>
      <span>资金</span>
    </NewsTab>
    <NewsTab $w={154}>
      <span>社区</span>
    </NewsTab>
    <NewsTab $w={160}>
      <span>简况(F10)</span>
    </NewsTab>
  </NewsTabs>
)

const App = () => (
  <>
    <GlobalStyle />
    <Screen>
      <Header />
      <Quote />
      <Etf />
      <Band />
      <Periods />
      <MaLegend />
      <CandleChart />
      <Macd h={252} gap={5} zero={204} scale={1} grid={126} shift={0}>
        <ScrollHandle />
      </Macd>
      <Macd h={247} gap={6} zero={198} scale={1.025} grid={124} shift={12}>
        <Bulb>
          <svg width="90" height="90" viewBox="0 0 90 90" fill="none" stroke="#e4f4ff" strokeWidth="4">
            <path d="M36 59c0-7-10-11-10-22a19 19 0 0 1 38 0c0 11-10 15-10 22z" />
            <path d="M36 59v14h18V59M36 66h18M37 43h16M45 43v16" />
          </svg>
        </Bulb>
      </Macd>
      <Band />
      <News />
      <Footer>
        <Action>
          <svg width="50" height="54" viewBox="0 0 50 54" fill="none">
            <rect x="2" y="4" width="46" height="46" rx="4" stroke="#dd373d" strokeWidth="3" />
            <text x="25" y="37" fill="#f0303f" fontSize="27" fontWeight="700" textAnchor="middle">
              买
            </text>
          </svg>
          买指数
        </Action>
        <Action>
          <svg width="50" height="54" viewBox="0 0 50 54" fill="none" stroke="#d4d4d4" strokeWidth="3">
            <rect x="2" y="4" width="46" height="46" />
            <path d="M12 27h26" />
          </svg>
          删自选
        </Action>
        <Action>
          <svg width="110" height="54" viewBox="0 0 110 54" fill="none" stroke="#d4d4d4" strokeWidth="3">
            <circle cx="54" cy="27" r="24" />
            <path d="M43 20h23M43 34h23" />
            <circle cx="97" cy="10" r="9" fill="#e83331" stroke="none" />
          </svg>
          功能
        </Action>
      </Footer>
    </Screen>
  </>
)

export default App
